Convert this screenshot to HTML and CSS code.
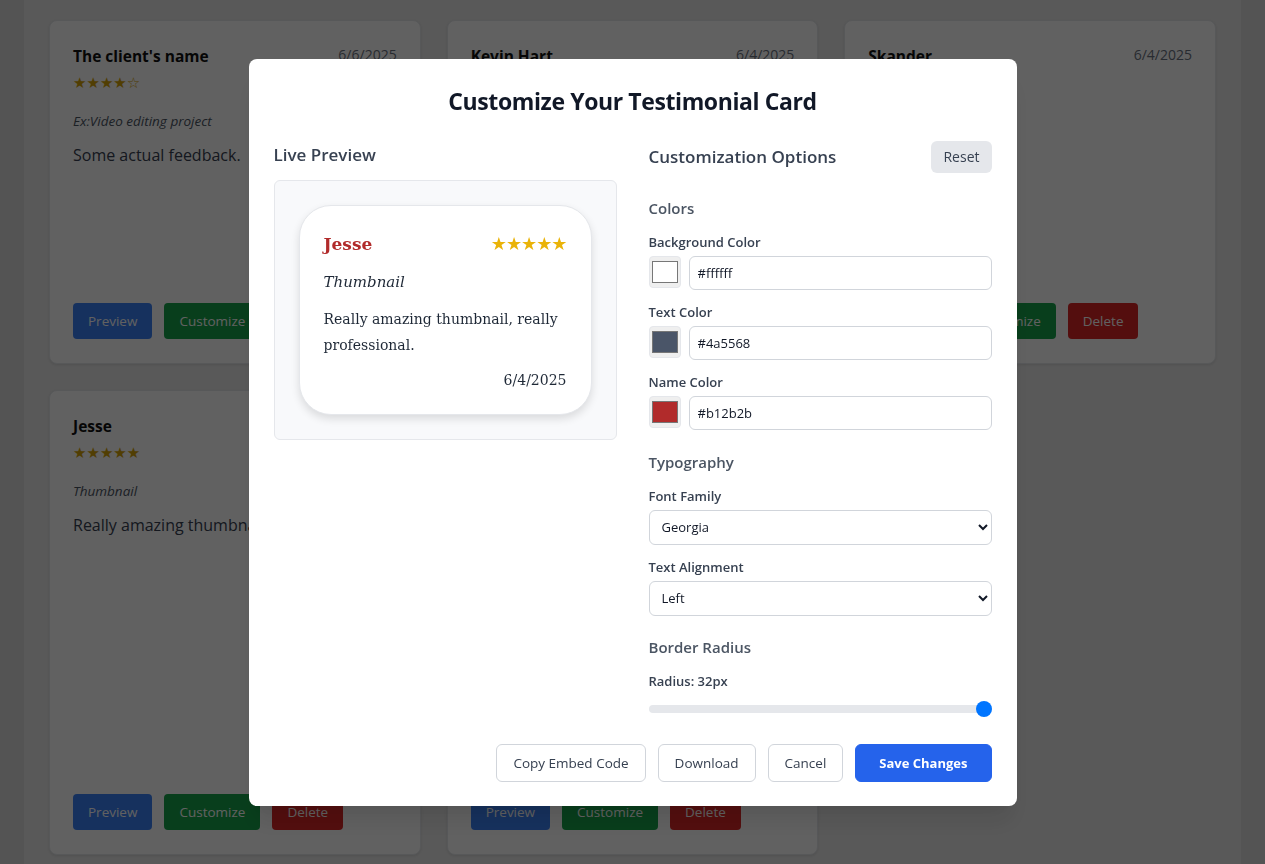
FILE: index.html
```html
<!DOCTYPE html>
<html lang="en">
<head>
<meta charset="utf-8">
<title>Testimonials</title>
<link rel="stylesheet" href="styles.css">
</head>
<body>
<main class="page">
  <div class="grid">
    <article class="t-card">
      <div class="t-head">
        <div>
          <div class="t-name">The client's name</div>
          <div class="t-stars">★★★★☆</div>
        </div>
        <div class="t-date">6/6/2025</div>
      </div>
      <div class="t-project">Ex:Video editing project</div>
      <p class="t-text">Some actual feedback.</p>
      <div class="t-actions">
        <button class="b b-blue">Preview</button>
        <button class="b b-green">Customize</button>
        <button class="b b-red">Delete</button>
      </div>
    </article>
    <article class="t-card">
      <div class="t-head">
        <div>
          <div class="t-name">Kevin Hart</div>
          <div class="t-stars">★★★★★</div>
        </div>
        <div class="t-date">6/4/2025</div>
      </div>
      <div class="t-project">Project</div>
      <p class="t-text">Feedback.</p>
      <div class="t-actions">
        <button class="b b-blue">Preview</button>
        <button class="b b-green">Customize</button>
        <button class="b b-red">Delete</button>
      </div>
    </article>
    <article class="t-card">
      <div class="t-head">
        <div>
          <div class="t-name">Skander</div>
          <div class="t-stars">★★★★★</div>
        </div>
        <div class="t-date">6/4/2025</div>
      </div>
      <div class="t-project">Project</div>
      <p class="t-text">Feedback.</p>
      <div class="t-actions">
        <button class="b b-blue">Preview</button>
        <button class="b b-green">Customize</button>
        <button class="b b-red">Delete</button>
      </div>
    </article>
    <article class="t-card">
      <div class="t-head">
        <div>
          <div class="t-name">Jesse</div>
          <div class="t-stars">★★★★★</div>
        </div>
        <div class="t-date"></div>
      </div>
      <div class="t-project">Thumbnail</div>
      <p class="t-text">Really amazing thumbnail, really professional.</p>
      <div class="t-actions">
        <button class="b b-blue">Preview</button>
        <button class="b b-green">Customize</button>
        <button class="b b-red">Delete</button>
      </div>
    </article>
    <article class="t-card">
      <div class="t-head">
        <div>
          <div class="t-name">Name</div>
          <div class="t-stars">★★★★★</div>
        </div>
        <div class="t-date"></div>
      </div>
      <div class="t-project">Project</div>
      <p class="t-text">Feedback.</p>
      <div class="t-actions">
        <button class="b b-blue">Preview</button>
        <button class="b b-green">Customize</button>
        <button class="b b-red">Delete</button>
      </div>
    </article>
  </div>
</main>

<div class="overlay">
  <div class="modal">
    <h2 class="modal-title">Customize Your Testimonial Card</h2>
    <div class="cols">
      <section class="col">
        <h3 class="col-title">Live Preview</h3>
        <div class="preview-box">
          <div class="p-card">
            <div class="p-head">
              <span class="p-name">Jesse</span>
              <span class="p-stars">★★★★★</span>
            </div>
            <div class="p-project">Thumbnail</div>
            <p class="p-text">Really amazing thumbnail, really professional.</p>
            <div class="p-date">6/4/2025</div>
          </div>
        </div>
      </section>
      <section class="col">
        <div class="opt-head">
          <h3 class="col-title">Customization Options</h3>
          <button class="reset">Reset</button>
        </div>

        <div class="group">
          <h4 class="group-title">Colors</h4>
          <div class="field">
            <label class="label">Background Color</label>
            <div class="color-row">
              <input type="color" class="swatch" value="#ffffff">
              <input type="text" class="text-in" value="#ffffff">
            </div>
          </div>
          <div class="field">
            <label class="label">Text Color</label>
            <div class="color-row">
              <input type="color" class="swatch" value="#4a5568">
              <input type="text" class="text-in" value="#4a5568">
            </div>
          </div>
          <div class="field">
            <label class="label">Name Color</label>
            <div class="color-row">
              <input type="color" class="swatch" value="#b12b2b">
              <input type="text" class="text-in" value="#b12b2b">
            </div>
          </div>
        </div>

        <div class="group group-typo">
          <h4 class="group-title">Typography</h4>
          <div class="field">
            <label class="label">Font Family</label>
            <select class="sel"><option>Georgia</option></select>
          </div>
          <div class="field">
            <label class="label">Text Alignment</label>
            <select class="sel"><option>Left</option></select>
          </div>
        </div>

        <div class="group group-radius">
          <h4 class="group-title">Border Radius</h4>
          <div class="field">
            <label class="label">Radius: 32px</label>
            <input type="range" class="range" min="0" max="32" value="32">
          </div>
        </div>
      </section>
    </div>
    <div class="footer">
      <button class="fbtn">Copy Embed Code</button>
      <button class="fbtn">Download</button>
      <button class="fbtn">Cancel</button>
      <button class="fbtn fbtn-primary">Save Changes</button>
    </div>
  </div>
</div>
</body>
</html>
```

FILE: styles.css
```css
* { box-sizing: border-box; }

html, body {
  margin: 0;
  height: 100%;
}

body {
  background: #dcdcdc;
  font-family: "Open Sans", "Noto Sans", sans-serif;
  overflow: hidden;
}

.page {
  margin: 0 24px;
  background: #eaeaea;
  min-height: 100%;
  padding: 20px 25px;
}

.grid {
  display: grid;
  grid-template-columns: repeat(3, minmax(0, 1fr));
  grid-template-rows: 344px 465px;
  gap: 26px;
}

.t-card {
  background: #fff;
  border: 1px solid #e5e7eb;
  border-radius: 8px;
  box-shadow: 0 1px 3px rgba(0,0,0,0.1);
  padding: 24px 23px;
  display: flex;
  flex-direction: column;
  overflow: hidden;
  min-width: 0;
}

.t-head {
  display: flex;
  justify-content: space-between;
  align-items: flex-start;
}

.t-name {
  font-size: 15.5px;
  font-weight: 700;
  color: #111;
  line-height: 22px;
}

.t-stars {
  color: #d4a30a;
  font-family: "DejaVu Sans", sans-serif;
  font-size: 15px;
  line-height: 20px;
  margin-top: 6px;
}

.t-date {
  font-size: 14px;
  color: #6b7280;
  line-height: 20px;
}

.t-project {
  font-size: 13.5px;
  font-style: italic;
  color: #4b5563;
  margin-top: 18px;
  line-height: 20px;
}

.t-text {
  font-size: 16px;
  color: #374151;
  margin: 12px 0 0;
  line-height: 24px;
  white-space: nowrap;
  overflow: hidden;
}

.t-actions {
  margin-top: auto;
  display: flex;
  gap: 12px;
}

.b {
  border: 0;
  border-radius: 4px;
  height: 36px;
  padding: 0 15px;
  font-family: inherit;
  font-size: 13.5px;
  color: #fff;
}

.b-blue { background: #3b82f6; }
.b-green { background: #16a34a; }
.b-red { background: #dc2626; }

.overlay {
  position: fixed;
  inset: 0;
  background: rgba(0,0,0,0.62);
  display: flex;
  align-items: center;
  justify-content: center;
}

.modal {
  width: 768px;
  background: #fff;
  border-radius: 8px;
  padding: 24px 25px;
  box-shadow: 0 20px 25px -5px rgba(0,0,0,0.1), 0 10px 10px -5px rgba(0,0,0,0.04);
}

.modal-title {
  margin: 2px 0 24px;
  text-align: center;
  font-size: 23px;
  letter-spacing: -0.4px;
  line-height: 32px;
  font-weight: 700;
  color: #111827;
}

.cols {
  display: grid;
  grid-template-columns: 1fr 1fr;
  gap: 32px;
}

.col-title {
  margin: 0 0 11px;
  font-size: 17px;
  line-height: 28px;
  font-weight: 600;
  color: #374151;
}

.preview-box {
  background: #f8f9fb;
  border: 1px solid #e5e7eb;
  border-radius: 6px;
  padding: 24px;
}

.p-card {
  background: #fff;
  border: 1px solid #e5e7eb;
  border-radius: 32px;
  padding: 24px;
  box-shadow: 0 4px 8px rgba(0,0,0,0.12);
  font-family: "DejaVu Serif", Georgia, serif;
  color: #1f2937;
}

.p-head {
  display: flex;
  justify-content: space-between;
  align-items: center;
  height: 28px;
}

.p-name {
  font-size: 17px;
  font-weight: 700;
  color: #b12b2b;
}

.p-stars {
  color: #eab308;
  font-size: 18px;
  font-family: "DejaVu Sans", sans-serif;
  letter-spacing: -1px;
}

.p-project {
  margin-top: 12px;
  font-style: italic;
  font-size: 15px;
  line-height: 24px;
}

.p-text {
  margin: 12px 0 0;
  font-size: 14px;
  line-height: 26px;
}

.p-date {
  margin-top: 12px;
  text-align: right;
  font-size: 14px;
  line-height: 20px;
}

.opt-head {
  display: flex;
  justify-content: space-between;
  align-items: center;
  height: 32px;
}

.opt-head .col-title { margin: 0; }

.reset {
  border: 0;
  background: #e5e7eb;
  border-radius: 6px;
  height: 32px;
  padding: 0 12px;
  font-family: inherit;
  font-size: 14px;
  color: #374151;
}

.group {
  margin-top: 23px;
  display: flex;
  flex-direction: column;
  gap: 12px;
}

.group-typo { margin-top: 20px; }
.group-radius { margin-top: 19px; }

.group-title {
  margin: 0;
  font-size: 15px;
  line-height: 24px;
  font-weight: 600;
  color: #4b5563;
}

.field {
  display: flex;
  flex-direction: column;
  gap: 4px;
}

.label {
  font-size: 13px;
  line-height: 20px;
  font-weight: 600;
  color: #374151;
}

.color-row {
  display: flex;
  gap: 8px;
  align-items: flex-start;
}

.swatch {
  width: 32px;
  height: 32px;
  padding: 0;
  margin: 0;
  border: 1px solid #e5e7eb;
  border-radius: 4px;
  background: #efefef;
  flex: none;
}

.text-in {
  flex: 1;
  height: 34px;
  margin: 0;
  border: 1px solid #d1d5db;
  border-radius: 6px;
  padding: 0 8px;
  font-family: inherit;
  font-size: 13px;
  color: #111827;
}

.sel {
  width: 100%;
  height: 35px;
  margin: 0;
  border: 1px solid #d1d5db;
  border-radius: 6px;
  padding: 0 8px;
  background: #fff;
  font-family: inherit;
  font-size: 13px;
  color: #111827;
}

.range {
  -webkit-appearance: none;
  appearance: none;
  width: 100%;
  height: 8px;
  margin: 10px 0 0;
  background: #e5e7eb;
  border-radius: 8px;
}

.range::-webkit-slider-thumb {
  -webkit-appearance: none;
  appearance: none;
  width: 16px;
  height: 16px;
  border-radius: 50%;
  background: #0075ff;
}

.footer {
  display: flex;
  justify-content: flex-end;
  gap: 12px;
  margin-top: 31px;
}

.fbtn {
  height: 38px;
  padding: 0 16px;
  border: 1px solid #d1d5db;
  border-radius: 6px;
  background: #fff;
  font-family: inherit;
  font-size: 13.5px;
  color: #374151;
}

.fbtn-primary {
  background: #2563eb;
  border-color: #2563eb;
  color: #fff;
  font-weight: 700;
  font-size: 13px;
  padding: 0 23px;
}
```
